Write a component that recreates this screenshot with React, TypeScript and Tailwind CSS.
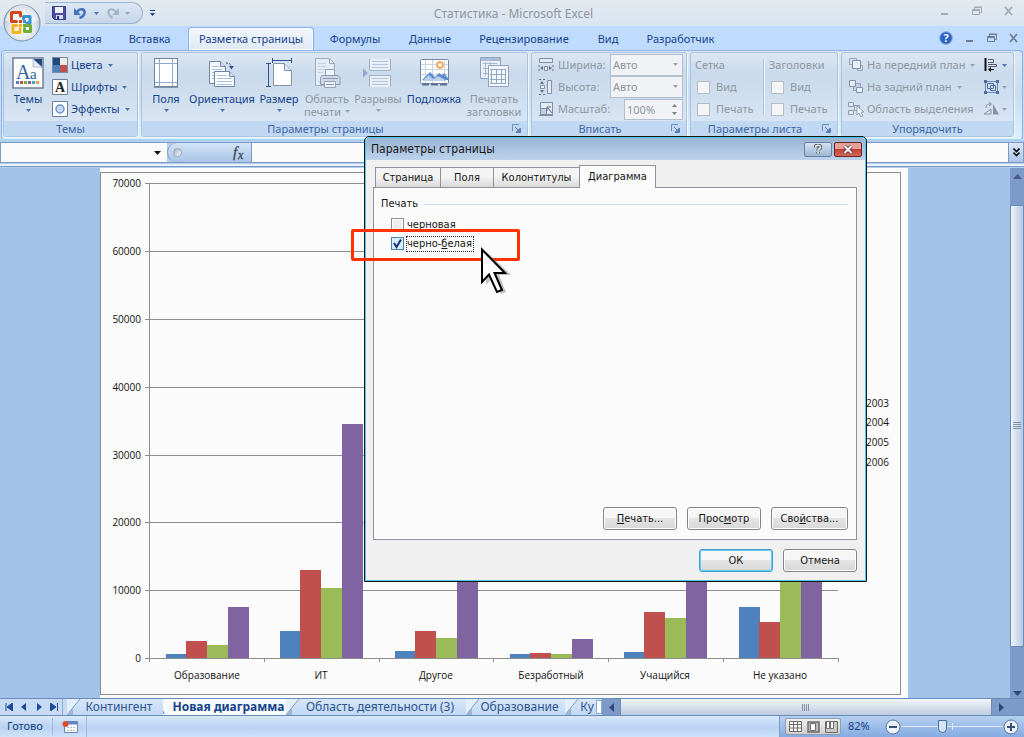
import React from 'react';

type IconProps = { children: React.ReactNode; w?: number; h?: number; className?: string };

function Icon({ children, w = 32, h = 32, className = '' }: IconProps) {
  return (
    <svg width={w} height={h} viewBox={`0 0 ${w} ${h}`} className={`block shrink-0 ${className}`} aria-hidden="true">
      {children}
    </svg>
  );
}

function Caret({ dim = false, className = '' }: { dim?: boolean; className?: string }) {
  return (
    <Icon w={5} h={3} className={className}>
      <path d="M0 0h5L2.5 3z" fill={dim ? '#9aa3ad' : '#4a74b0'} />
    </Icon>
  );
}

/* ---------- ribbon icons ---------- */

const ThemesIcon = () => (
  <Icon>
    <rect x="1" y="1" width="30" height="30" fill="#fdfdfd" stroke="#6d7f99" strokeWidth="1.5" />
    <path d="M21 2h9v9z" fill="#23457f" />
    <path d="M21 2v8h9z" fill="#e8eef7" stroke="#8a9cb8" strokeWidth=".6" />
    <text x="4" y="22" fontSize="20" fill="#2f62a3" className="font-['Liberation_Serif',serif]">A</text>
    <text x="18" y="22" fontSize="15" fill="#2f62a3" className="font-['Liberation_Serif',serif]">a</text>
    <path d="M4 24h3v3H4z" fill="#4f81bd" />
    <path d="M8 24h3v3H8z" fill="#c0504d" />
    <path d="M12 24h3v3h-3z" fill="#7fa843" />
    <path d="M16 24h3v3h-3z" fill="#8064a2" />
    <path d="M20 24h3v3h-3z" fill="#36a6c2" />
    <path d="M24 24h3v3h-3z" fill="#f79646" />
  </Icon>
);
const ColorsIcon = () => (
  <Icon w={16} h={16}>
    <path d="M0 0h8v8H0z" fill="#1f497d" />
    <path d="M8 0h8v8H8z" fill="#eeece1" />
    <path d="M0 8h8v8H0z" fill="#4f81bd" />
    <path d="M8 8h8v8H8z" fill="#c0504d" />
    <path d="M.5 .5h15v15H.5z" fill="none" stroke="#7c8ca6" />
  </Icon>
);
const FontsIcon = () => (
  <Icon w={16} h={16}>
    <path d="M.5 .5h15v15H.5z" fill="#fff" stroke="#6d7f99" />
    <text x="3" y="13" fontSize="14" fontWeight="700" fill="#222" className="font-['Liberation_Serif',serif]">A</text>
  </Icon>
);
const EffectsIcon = () => (
  <Icon w={16} h={16}>
    <path d="M.5 .5h15v15H.5z" fill="#fff" stroke="#6d7f99" />
    <circle cx="8" cy="8" r="4" fill="#c9dcf5" stroke="#6b93cc" strokeWidth="1.5" />
  </Icon>
);
const MarginsIcon = () => (
  <Icon>
    <rect x="4.500" y="1.500" width="23" height="28" fill="#fff" stroke="#6c83a6" />
    <path d="M9.500 2v27M22.500 2v27M5 6.500h22M5 25.500h22" stroke="#8faad0" fill="none" />
    <path d="M4 30.500h24" stroke="#8393aa" />
  </Icon>
);
const OrientationIcon = () => (
  <Icon>
    <path d="M3.500 4.500h11l5 5v17h-16z" fill="#f5f9ff" stroke="#6c83a6" />
    <path d="M14.500 4.500v5h5" fill="#d5e2f4" stroke="#6c83a6" />
    <path d="M6 9.500h7M6 12.500h10M6 15.500h3M6 18.500h3M6 21.500h3" stroke="#a9bfdf" />
    <path d="M8.500 14.500h15l5 5v10h-20z" fill="#fff" stroke="#6c83a6" />
    <path d="M23.500 14.500v5h5" fill="#d5e2f4" stroke="#6c83a6" />
    <path d="M11 18.500h10M11 21.500h15M11 24.500h15M11 27.500h15" stroke="#a9bfdf" />
    <path d="M20 6c3 0 5 1 5.500 4" fill="none" stroke="#34538a" strokeDasharray="2 1" />
    <path d="M23 9h5l-2.500 3.500z" fill="#34538a" />
  </Icon>
);
const SizeIcon = () => (
  <Icon>
    <path d="M10.500 6.500h11l7 7v15h-18z" fill="#fff" stroke="#8393aa" />
    <path d="M21.500 6.500v7h7" fill="#dbe6f5" stroke="#8393aa" />
    <path d="M10 3.500h18M9.500 1v5M28.500 1v5M5.500 7v22M3 6.500h5M3 29.500h5" stroke="#34538a" fill="none" />
  </Icon>
);
const PrintAreaIcon = () => (
  <Icon>
    <path d="M4.500 1.500h14l5 5v22h-19z" fill="#e4ebf4" stroke="#9eacc0" />
    <path d="M18.500 1.500v5h5" fill="none" stroke="#9eacc0" />
    <path d="M7 6.500h8M7 9.500h8M7 12.500h7M7 15.500h5M7 24.500h2" stroke="#c3cfe0" />
    <path d="M14.500 12.500h9v7h-9z" fill="#f2f6fa" stroke="#93a2b8" />
    <path d="M11 18.500h16l2 2v7H9.500v-7z" fill="#cfd9e6" stroke="#8b9ab0" />
    <path d="M13.500 24.500h11v6h-11z" fill="#edf2f8" stroke="#93a2b8" />
    <path d="M12 21.500h15M15 27.500h8" stroke="#8b9ab0" />
  </Icon>
);
const BreaksIcon = () => (
  <Icon>
    <path d="M7.500 2v11.500h21V2M7.500 30V18.500h21V30" fill="#e9eff7" stroke="#9fb0c8" />
    <path d="M10 4.500h16M10 7.500h16M10 10.500h16M10 21.500h16M10 24.500h16M10 27.500h16" stroke="#b5c4d9" />
    <path d="M1 11.500l5 4.500-5 4.500z" fill="#93a7c6" />
  </Icon>
);
const BackgroundIcon = () => (
  <Icon>
    <rect x="2.500" y="2.500" width="28" height="24" rx="1" fill="#fdfeff" stroke="#7489a8" />
    <path d="M7.500 3v23M14.500 3v23M26.500 3v23M3 7.500h27M3 12.500h27M3 17.500h27" stroke="#c8d5e6" />
    <circle cx="22" cy="8" r="3" fill="#fff1d0" stroke="#ef9a45" strokeWidth="1.500" />
    <path d="M4 23l8-8 5 5 4-4 3 2 2-2 4 5v2H4z" fill="#5d8cca" />
    <path d="M4 24l7-6 4 4 5-3 9 5z" fill="#b7cfec" />
    <path d="M4 27.500h26" stroke="#5c6f8c" strokeWidth="2" strokeDasharray="7 2" />
  </Icon>
);
const TitlesIcon = () => (
  <Icon>
    <path d="M2.500 .5h20v21h-20z" fill="#e8eff8" stroke="#8fa2be" />
    <path d="M3 2.500h19" stroke="#a9bbd5" strokeWidth="3" />
    <path d="M5 6.500h14M5 11.500h14M5 16.500h14M7.500 5v14M12.500 5v14" stroke="#a5b8d3" />
    <path d="M10.500 8.500h20v21h-20z" fill="#f4f8fd" stroke="#8fa2be" />
    <path d="M12 12.500h15M12 17.500h15M12 22.500h15M12 26.500h15M13.500 12v15M18.500 12v15M23.500 12v15M27.500 12v15" stroke="#91a7c7" />
  </Icon>
);
const WidthIcon = () => (
  <Icon w={16} h={16}>
    <path d="M1.500 1.500h13v4h-13z" fill="#e3eaf3" stroke="#7f8fa8" />
    <path d="M1 8v2M1 12v2M15 8v2M15 12v2" stroke="#5f6f8a" />
    <path d="M5 9v4l-3-2zM11 9v4l3-2z" fill="#5f6f8a" />
    <path d="M6.500 9.500h3v4h-3z" fill="#eef3f9" stroke="#7f8fa8" />
  </Icon>
);
const HeightIcon = () => (
  <Icon w={16} h={16}>
    <path d="M9.500 1.500h4v13h-4z" fill="#e3eaf3" stroke="#7f8fa8" />
    <path d="M1 .5h2M5 .5h2M1 15.500h2M5 15.500h2" stroke="#5f6f8a" />
    <path d="M2 5h4L4 2zM2 11h4l-2 3z" fill="#5f6f8a" />
    <path d="M2.500 6.500h4v3h-4z" fill="#eef3f9" stroke="#7f8fa8" />
  </Icon>
);
const ScaleIcon = () => (
  <Icon w={16} h={16}>
    <path d="M2.500 1.500h12v12h-12z" fill="#e3eaf3" stroke="#7f8fa8" />
    <path d="M2.500 7.500h6v6h-6z" fill="#c2cfe0" stroke="#7f8fa8" />
    <path d="M14 12L9 6M9 10V6h4" stroke="#5f6f8a" fill="none" />
    <path d="M1 14.500h14" stroke="#7f8fa8" />
  </Icon>
);
const FrontIcon = () => (
  <Icon w={16} h={16}>
    <path d="M1.500 1.500h7v6h-7zM9.500 8.500h5v5h-5z" fill="#d5deea" stroke="#95a3b8" />
    <path d="M4.500 3.500h8v8h-8z" fill="#e8eef6" stroke="#8291aa" />
  </Icon>
);
const BackIcon = () => (
  <Icon w={16} h={16}>
    <path d="M5.500 4.500h7v7h-7z" fill="#c5d1e1" stroke="#95a3b8" />
    <path d="M1.500 1.500h6v6h-6zM8.500 8.500h6v5h-6z" fill="#e8eef6" stroke="#8291aa" />
  </Icon>
);
const SelectionIcon = () => (
  <Icon w={16} h={16}>
    <path d="M.5 1.500h5v4h-5zM.5 9.500h5v4h-5zM6.500 4.500h5v5h-5z" fill="#dde5ef" stroke="#8f9db3" />
    <path d="M9 5v9l2-2 2 4 2-1-2-4h3z" fill="#f5f8fb" stroke="#8291aa" strokeWidth=".8" />
  </Icon>
);
const AlignIcon = () => (
  <Icon w={16} h={16}>
    <path d="M2.500 1v13" stroke="#111" strokeWidth="2" />
    <path d="M5 2.500h5.500v3H5M5 7.500h8.500v2H5" fill="#dfe7f1" stroke="#4f5e78" />
    <path d="M7 12.500h4" stroke="#111" />
    <path d="M8 10v5l-3-2.500z" fill="#111" />
  </Icon>
);
const GroupIcon = () => (
  <Icon w={16} h={16}>
    <path d="M2.500 2.500h12v11h-12z" fill="none" stroke="#7089b5" />
    <path d="M4.500 4.500h6v5h-6zM7.500 6.500h5v5h-5z" fill="#d7e2f1" stroke="#4c6ba3" />
    <path d="M1 1h3v3H1zM13 1h3v3h-3zM1 12h3v3H1zM13 12h3v3h-3z" fill="#4c6ba3" />
  </Icon>
);
const RotateIcon = () => (
  <Icon w={16} h={16}>
    <path d="M8 13H1l7-5z" fill="#d7dfe9" stroke="#8492a8" />
    <path d="M10 13.500h6L10 3z" fill="#8492a8" />
    <path d="M3 7c0-3 1-4 5-4M6 1l2.500 2L6 5" fill="none" stroke="#8492a8" />
  </Icon>
);

const Launcher = () => (
  <button aria-label="Открыть диалог" className="absolute right-[6px] top-[3px]">
    <Icon w={9} h={9}>
      <path d="M.5 7V.5H7" fill="none" stroke="#6e8fbd" />
      <path d="M3 3l3 3M8.500 4v4.500H4z" stroke="#5a7eb4" fill="#e5effa" />
      <path d="M8 4v4H4z" fill="#5a7eb4" />
    </Icon>
  </button>
);

const OfficeLogo = () => (
  <Icon w={38} h={38}>
    <defs>
      <radialGradient id="orb" cx=".5" cy=".65" r=".65">
        <stop offset="0" stopColor="#fff" />
        <stop offset=".55" stopColor="#dfe5ed" />
        <stop offset="1" stopColor="#9fafc4" />
      </radialGradient>
    </defs>
    <circle cx="19" cy="19" r="18" fill="url(#orb)" stroke="#7c8fa9" />
    <path d="M3 17a16 16 0 0 1 32 0q-16 5-32 0z" fill="#fff" opacity=".6" />
    <g fill="none" strokeWidth="3" strokeLinejoin="round" strokeLinecap="round">
      <path d="M13.500 17.500H8.500V8.500H17.500V12" stroke="#d6451a" />
      <path d="M20.500 15V12.500h6.500V19h-3" stroke="#3b93d3" />
      <path d="M17 24.500v4h-7v-7h4" stroke="#f4b41d" />
      <path d="M24 21.500h3.500v6h-6v-3" stroke="#6fae3a" />
    </g>
    <path d="M16 16h3v3h-3z" fill="#d6451a" />
    <path d="M20 16h3v3h-3z" fill="#3b93d3" />
    <path d="M16 20h3v3h-3z" fill="#f4b41d" />
    <path d="M20 20h3v3h-3z" fill="#6fae3a" />
  </Icon>
);

/* ---------- ribbon parts ---------- */

const tabs = [
  { label: 'Главная', cls: 'w-[70px]' },
  { label: 'Вставка', cls: 'w-[69px]' },
  { label: 'Разметка страницы', cls: 'w-[126px] ml-1', active: true },
  { label: 'Формулы', cls: 'w-[82px]' },
  { label: 'Данные', cls: 'w-[68px]' },
  { label: 'Рецензирование', cls: 'w-[120px]' },
  { label: 'Вид', cls: 'w-[48px]' },
  { label: 'Разработчик', cls: 'w-[97px]' },
];

function Group({ title, width, launcher, children }: { title: string; width: string; launcher?: boolean; children: React.ReactNode }) {
  return (
    <section className={`${width} flex h-[85px] shrink-0 flex-col overflow-hidden rounded-[3px] border border-[#a9c3e2] bg-linear-to-b from-[#dde7f3] from-0% via-[#c9daec] via-25% to-[#dbe7f5] shadow-[1px_1px_0_#f0f6fd]`}>
      <div className="flex min-h-0 flex-1">{children}</div>
      <div className={`relative h-[15px] bg-[#c1d8f3] text-center text-[11px] leading-[15px] text-[#3f66a3] ${launcher ? 'pr-[18px]' : ''}`}>
        {title}
        {launcher && <Launcher />}
      </div>
    </section>
  );
}

function BigButton({ icon, lines, width, dim, caret = 'none' }: { icon: React.ReactNode; lines: string[]; width: string; dim?: boolean; caret?: 'none' | 'below' | 'inline' }) {
  return (
    <button disabled={dim} className={`${width} flex shrink-0 flex-col items-center pt-1 text-[11px] leading-[13px] whitespace-nowrap ${dim ? 'text-[#8e979f]' : 'text-[#15428b]'}`}>
      {icon}
      <span className="mt-[3px]">{lines[0]}</span>
      {lines[1] && (
        <span className="flex items-center gap-1">
          {lines[1]}
          {caret === 'inline' && <Caret dim />}
        </span>
      )}
      {caret === 'below' && <Caret dim={dim} className="mt-1" />}
    </button>
  );
}

function SmallButton({ icon, label, dim, caret = true }: { icon: React.ReactNode; label: string; dim?: boolean; caret?: boolean }) {
  return (
    <button disabled={dim} className={`flex h-[22px] items-center whitespace-nowrap text-[11px] ${dim ? 'text-[#8e979f]' : 'text-[#15428b]'}`}>
      {icon}
      <span className={label ? 'ml-[3px]' : ''}>{label}</span>
      {caret && <Caret dim={dim} className={label ? 'ml-[5px]' : 'ml-[3px]'} />}
    </button>
  );
}

function FitRow({ icon, label, children }: { icon: React.ReactNode; label: string; children: React.ReactNode }) {
  return (
    <label className="flex h-[22px] items-center gap-1 text-[11px] text-[#8e979f]">
      {icon}
      <span className="flex-1">{label}</span>
      {children}
    </label>
  );
}

function AutoSelect() {
  return (
    <span className="relative flex">
      <select disabled defaultValue="Авто" className="h-[22px] w-[73px] appearance-none border border-[#b4bfcc] bg-[#f0f2f5] px-[2px] text-[11px] text-[#8e979f] opacity-100">
        <option>Авто</option>
      </select>
      <Caret dim className="absolute right-[5px] top-[9px]" />
    </span>
  );
}

function SheetOptions({ title }: { title: string }) {
  return (
    <div role="group" aria-label={title} className="flex flex-col text-[11px] text-[#8e979f]">
      <div className="flex h-[22px] items-center">{title}</div>
      {['Вид', 'Печать'].map((t) => (
        <label key={t} className="flex h-[22px] items-center gap-[6px]">
          <input type="checkbox" disabled className="ml-[2px] size-[13px] appearance-none border border-[#b5bcc4] bg-[#f4f5f6]" />
          {t}
        </label>
      ))}
    </div>
  );
}

function WindowGlyph({ kind, color }: { kind: 'min' | 'restore' | 'close'; color: string }) {
  return (
    <Icon w={10} h={10}>
      {kind === 'min' && <path d="M1 8h7" stroke={color} strokeWidth="2" />}
      {kind === 'restore' && (
        <path d="M2.500 3V1.500h7v5H8M.5 3.500h7v5h-7zM.5 4.500h7M2 1h8" fill="none" stroke={color} />
      )}
      {kind === 'close' && <path d="M1 1l7 8M8 1L1 9" stroke={color} strokeWidth="1.800" />}
    </Icon>
  );
}

/* ---------- chart ---------- */

const BASE = 658;
const colors = ['#4f81bd', '#c0504d', '#9bbb59', '#8064a2'];
const categories = [
  { name: 'Образование', x: 166, tops: [654, 641, 645, 607] },
  { name: 'ИТ', x: 280, tops: [631, 570, 588, 424] },
  { name: 'Другое', x: 395, tops: [651, 631, 638, 540] },
  { name: 'Безработный', x: 510, tops: [654, 653, 654, 639] },
  { name: 'Учащийся', x: 624, tops: [652, 612, 618, 500] },
  { name: 'Не указано', x: 739, tops: [607, 622, 560, 480] },
];
const axis = [0, 10000, 20000, 30000, 40000, 50000, 60000, 70000];
const axisY = [658, 590, 522, 455, 387, 319, 251, 183];
const legend = [
  { year: '2003', y: 407 },
  { year: '2004', y: 426 },
  { year: '2005', y: 446 },
  { year: '2006', y: 466 },
];

function Chart() {
  return (
    <svg viewBox="100 168 808 530" className="block h-full w-full bg-[#fbfbfb] font-['Open_Sans','Noto_Sans',sans-serif] text-[10px]" role="img" aria-label="Диаграмма">
      <rect x="100.500" y="172.500" width="800" height="522" fill="none" stroke="#8e8e8e" />
      {axis.map((v, i) => (
        <g key={v}>
          <path d={`M145 ${axisY[i] + 0.5}H838`} stroke="#8e8e8e" />
          <text x="141" y={axisY[i] + 4} textAnchor="end" fill="#111">{v}</text>
        </g>
      ))}
      <path d="M149.500 183V662M264.500 658v4M379.500 658v4M493.500 658v4M608.500 658v4M723.500 658v4M838.500 658v4" stroke="#8e8e8e" />
      {categories.map((c) => (
        <g key={c.name}>
          {c.tops.map((t, i) => (
            <rect key={i} x={c.x + i * 21 - (i ? 1 : 0)} y={t} width="21" height={BASE - t} fill={colors[i]} />
          ))}
          <text x={c.x + 41} y="679" textAnchor="middle" fill="#111">{c.name}</text>
        </g>
      ))}
      {legend.map((l, i) => (
        <g key={l.year}>
          <rect x="856" y={l.y - 7} width="6" height="6" fill={colors[i]} />
          <text x="866" y={l.y} fill="#111">{l.year}</text>
        </g>
      ))}
    </svg>
  );
}

/* ---------- dialog ---------- */

function DialogButton({ children, width, primary }: { children: React.ReactNode; width: string; primary?: boolean }) {
  return (
    <button className={`${width} h-[23px] rounded-[3px] border bg-linear-to-b from-[#f6f6f6] from-45% via-[#e3e3e3] via-50% to-[#d8d8d8] ${primary ? 'border-[#3c9fd0] shadow-[inset_0_0_0_1px_#62cdf0]' : 'border-[#858585] shadow-[inset_0_0_0_1px_#fff]'}`}>
      {children}
    </button>
  );
}

const dialogTabs = [
  { label: 'Страница', cls: 'w-[66px]' },
  { label: 'Поля', cls: 'w-[54px]' },
  { label: 'Колонтитулы', cls: 'w-[87px]' },
];

function PageSetupDialog() {
  return (
    <div role="dialog" aria-label="Параметры страницы" className="absolute left-[364px] top-[136px] z-20 flex h-[446px] w-[503px] flex-col rounded-t-[5px] border border-[#101820] bg-[#f0f0f0] font-['DejaVu_Sans_Condensed','Noto_Sans',sans-serif] text-[11px] leading-[14px] text-[#161616] shadow-[inset_0_0_0_1px_#52c5e8]">
      <header className="m-px flex h-[22px] items-center rounded-t-[4px] bg-linear-to-b from-[#98b4d2] to-[#bdd3ec] pl-[5px] pr-[3px]">
        <h2 className="flex-1 text-[12px]">Параметры страницы</h2>
        <button aria-label="Справка" className="mr-[2px] flex h-[15px] w-[28px] items-center justify-center rounded-[2px] border border-[#6582a5] bg-linear-to-b from-[#d5e2f0] to-[#9fb8d3]">
          <Icon w={10} h={10}>
            <path d="M2.500 3.500C2.500 .5 7.500 .5 7.500 3.200 7.500 5 5 4.500 5 6.500M5 8v1.500" fill="none" stroke="#3b4756" strokeWidth="3.400" />
            <path d="M2.500 3.500C2.500 .5 7.500 .5 7.500 3.200 7.500 5 5 4.500 5 6.500M5 8v1.500" fill="none" stroke="#fff" strokeWidth="1.600" />
          </Icon>
        </button>
        <button aria-label="Закрыть" className="flex h-[15px] w-[28px] items-center justify-center rounded-[2px] border border-[#6a2722] bg-linear-to-b from-[#e5a197] from-45% via-[#c0402f] via-50% to-[#d5675a]">
          <Icon w={12} h={9}>
            <path d="M2.500 1l7 7M9.500 1l-7 7" stroke="#5b2a2a" strokeWidth="3.600" />
            <path d="M2.500 1l7 7M9.500 1l-7 7" stroke="#fff" strokeWidth="2" />
          </Icon>
        </button>
      </header>
      <div className="flex flex-1 flex-col pb-[9px] pl-2 pr-[9px] pt-1">
        <div role="tablist" className="flex items-end pl-[2px]">
          {dialogTabs.map((t) => (
            <button key={t.label} role="tab" className={`${t.cls} -mr-px h-[20px] border border-b-0 border-[#8d929c] bg-linear-to-b from-[#f4f4f4] from-45% to-[#d9d9d9]`}>
              {t.label}
            </button>
          ))}
          <button role="tab" aria-selected="true" className="relative z-10 -mb-px h-[23px] w-[77px] border border-b-0 border-[#8d929c] bg-[#fbfbfb]">Диаграмма</button>
        </div>
        <div className="flex flex-1 flex-col border border-[#8d929c] bg-[#fbfbfb] pb-[9px] pl-[7px] pr-2 pt-[9px]">
          <div className="flex items-center gap-[6px]">
            Печать
            <span className="h-px flex-1 bg-[#d5dfe8]" />
          </div>
          <div className="mt-1 flex flex-col items-start pl-[10px]">
            <label className="flex h-[19px] items-center gap-[2px]">
              <input type="checkbox" className="size-[13px] appearance-none border border-[#8e8f8f] bg-[#eceeef] shadow-[inset_0_0_0_1px_#fff]" />
              <span className="px-px">черновая</span>
            </label>
            <label className="flex h-[19px] items-center gap-[2px]">
              <span className="relative flex">
                <input type="checkbox" defaultChecked className="peer size-[13px] appearance-none border border-[#4f86a8] bg-[#d5eefa]" />
                <svg viewBox="0 0 13 13" className="pointer-events-none absolute inset-0 hidden size-[13px] peer-checked:block" aria-hidden="true">
                  <path d="M3 6l2.500 4L10 2.500" fill="none" stroke="#1d2f7a" strokeWidth="2" />
                </svg>
              </span>
              <span className="border border-dotted border-[#333] pr-px">черно-<u>б</u>елая</span>
            </label>
          </div>
          <div className="mt-auto flex justify-end gap-[10px]">
            <DialogButton width="w-[74px]"><u>П</u>ечать...</DialogButton>
            <DialogButton width="w-[74px]">Прос<u>м</u>отр</DialogButton>
            <DialogButton width="w-[77px]">Сво<u>й</u>ства...</DialogButton>
          </div>
        </div>
        <div className="mt-[9px] flex justify-end gap-[10px]">
          <DialogButton width="w-[74px]" primary>ОК</DialogButton>
          <DialogButton width="w-[74px]">Отмена</DialogButton>
        </div>
      </div>
    </div>
  );
}

/* ---------- bottom bars ---------- */

function SheetTab({ label, width, active }: { label: string; width: string; active?: boolean }) {
  return (
    <button className={`${width} relative flex h-[16px] shrink-0 items-center justify-center overflow-hidden whitespace-nowrap pl-2 text-[12px] leading-[16px] ${active ? 'bg-[#f8fbff] font-bold text-[#15428b]' : 'bg-linear-to-b from-[#d9e8fa] to-[#c1d7f2] text-[#2c5491]'}`}>
      <svg width="14" height="16" viewBox="0 0 14 16" className="absolute left-0 top-0" aria-hidden="true">
        {active ? (
          <path d="M0 0v15h2l-2-4z" fill="#7f9dc4" />
        ) : (
          <>
            <path d="M0 0h13L0 16z" fill="#e4eefa" />
            <path d="M13 0L0 16" stroke="#7f9dc4" />
            <path d="M0 16l6-7v7z" fill="#9db4d2" />
          </>
        )}
      </svg>
      {label}
    </button>
  );
}

const navGlyphs = ['M1 0v8M7.500 0v8L2 4z', 'M6 0v8L1 4z', 'M2 0v8l5-4z', 'M7.500 0v8M.5 0v8L6 4z'];
const navNames = ['Первый лист', 'Предыдущий лист', 'Следующий лист', 'Последний лист'];

export default function App() {
  return (
    <div className="relative flex h-screen min-h-[600px] flex-col overflow-hidden bg-[#bfdbff] font-['Noto_Sans','Open_Sans',sans-serif] text-[11px] text-[#15428b]">
      {/* title bar */}
      <header className="flex h-[26px] shrink-0 items-center bg-linear-to-b from-[#e4eaef] to-[#d8e4f0]">
        <div className="ml-[45px] flex h-[22px] w-[98px] items-center gap-[7px] rounded-r-full border border-l-0 border-[#9db6d4] bg-linear-to-b from-[#dce7f4] to-[#c6d6ea] pl-[7px]">
          <button aria-label="Сохранить">
            <Icon w={14} h={14}>
              <path d="M.5 .5h13v13h-11l-2-2z" fill="#4b4fa8" stroke="#3a3d86" />
              <path d="M3 1h8v6H3z" fill="#eef2fb" />
              <path d="M4 9h7v4H4z" fill="#d5dbe9" />
              <path d="M5 10h2v3H5z" fill="#2d3070" />
            </Icon>
          </button>
          <button aria-label="Отменить" className="flex items-center gap-[7px]">
            <Icon w={14} h={14}>
              <path d="M4 6C7 1.500 12 3 11.500 7c-.5 2.500-2 4-5 5" fill="none" stroke="#4670c0" strokeWidth="2.600" />
              <path d="M1 2v7h7z" fill="#4670c0" />
            </Icon>
            <Caret />
          </button>
          <button aria-label="Вернуть" className="flex items-center gap-[5px]">
            <Icon w={14} h={14}>
              <path d="M10 6C7 1.500 2 3 2.500 7c.5 2.500 2 4 4 5" fill="none" stroke="#a4b3c9" strokeWidth="2" />
              <path d="M13 2v7H6z" fill="#a4b3c9" />
            </Icon>
            <Caret dim />
          </button>
        </div>
        <button aria-label="Настройка панели" className="ml-[7px]">
          <Icon w={5} h={6}>
            <path d="M0 .5h5" stroke="#15428b" />
            <path d="M0 3h5L2.500 6z" fill="#15428b" />
          </Icon>
        </button>
        <h1 className="flex-1 pr-[68px] pt-[2px] text-center text-[12px] text-[#8e959c]">Статистика - Microsoft Excel</h1>
        <div className="mr-[10px] flex gap-[22px] pb-1">
          <button aria-label="Свернуть"><WindowGlyph kind="min" color="#a3a9af" /></button>
          <button aria-label="Восстановить"><WindowGlyph kind="restore" color="#a3a9af" /></button>
          <button aria-label="Закрыть окно"><WindowGlyph kind="close" color="#a3a9af" /></button>
        </div>
      </header>
      <button aria-label="Office" className="absolute left-[3px] top-1 z-10"><OfficeLogo /></button>

      {/* ribbon tabs */}
      <nav className="flex h-[24px] shrink-0 items-end bg-[#bfdbff] pl-[45px]">
        {tabs.map((t) => (
          <button
            key={t.label}
            className={`${t.cls} shrink-0 whitespace-nowrap text-center text-[11px] ${t.active ? 'h-[23px] rounded-t-[4px] border border-b-0 border-[#8db2e3] bg-linear-to-b from-[#f2f7fd] to-[#dfe9f5] shadow-[inset_0_0_0_1px_#f4f9ff]' : 'h-[22px]'}`}
          >
            {t.label}
          </button>
        ))}
        <div className="ml-auto mr-[5px] flex items-center gap-[12px] self-center">
          <button aria-label="Справка">
            <Icon w={14} h={14}>
              <circle cx="7" cy="7" r="6.300" fill="#2d63c4" stroke="#8fa9d2" />
              <text x="7" y="11" textAnchor="middle" fontSize="11" fontWeight="700" fill="#fff">?</text>
            </Icon>
          </button>
          <button aria-label="Свернуть книгу"><WindowGlyph kind="min" color="#6f7d8c" /></button>
          <button aria-label="Восстановить книгу"><WindowGlyph kind="restore" color="#6f7d8c" /></button>
          <button aria-label="Закрыть книгу"><WindowGlyph kind="close" color="#6f7d8c" /></button>
        </div>
      </nav>

      {/* ribbon */}
      <div className="mx-px flex h-[90px] shrink-0 gap-[3px] rounded-[4px] border border-[#8db2e3] border-b-[#9cd8ee] bg-linear-to-b from-[#dbe6f4] via-[#cbdcef] to-[#dcf1fc] px-px py-px">
        <Group title="Темы" width="w-[135px]">
          <BigButton icon={<ThemesIcon />} lines={['Темы']} width="w-[48px]" caret="below" />
          <div className="flex flex-col pt-px">
            <SmallButton icon={<ColorsIcon />} label="Цвета" />
            <SmallButton icon={<FontsIcon />} label="Шрифты" />
            <SmallButton icon={<EffectsIcon />} label="Эффекты" />
          </div>
        </Group>
        <Group title="Параметры страницы" width="w-[387px]" launcher>
          <div className="flex pl-[2px]">
            <BigButton icon={<MarginsIcon />} lines={['Поля']} width="w-[44px]" caret="below" />
            <BigButton icon={<OrientationIcon />} lines={['Ориентация']} width="w-[68px]" caret="below" />
            <BigButton icon={<SizeIcon />} lines={['Размер']} width="w-[46px]" caret="below" />
            <BigButton icon={<PrintAreaIcon />} lines={['Область', 'печати']} width="w-[50px]" dim caret="inline" />
            <BigButton icon={<BreaksIcon />} lines={['Разрывы']} width="w-[52px]" dim caret="below" />
            <BigButton icon={<BackgroundIcon />} lines={['Подложка']} width="w-[60px]" />
            <BigButton icon={<TitlesIcon />} lines={['Печатать', 'заголовки']} width="w-[60px]" dim />
          </div>
        </Group>
        <Group title="Вписать" width="w-[156px]" launcher>
          <div className="flex flex-1 flex-col pl-[6px] pr-[3px] pt-px">
            <FitRow icon={<WidthIcon />} label="Ширина:"><AutoSelect /></FitRow>
            <FitRow icon={<HeightIcon />} label="Высота:"><AutoSelect /></FitRow>
            <FitRow icon={<ScaleIcon />} label="Масштаб:">
              <span className="relative flex">
                <input disabled defaultValue="100%" className="h-[21px] w-[59px] border border-[#b4bfcc] bg-[#f0f2f5] px-[2px]" />
                <Icon w={5} h={11} className="absolute right-[6px] top-[5px]">
                  <path d="M0 3h5L2.500 0zM0 8h5l-2.500 3z" fill="#777f88" />
                </Icon>
              </span>
            </FitRow>
          </div>
        </Group>
        <Group title="Параметры листа" width="w-[148px]" launcher>
          <div className="flex pl-[4px] pt-px">
            <div className="w-[68px]"><SheetOptions title="Сетка" /></div>
            <div className="mr-[4px] mt-[5px] h-[56px] w-[2px] border-l border-[#a9c3e2] bg-[#eef5fc]" />
            <SheetOptions title="Заголовки" />
          </div>
        </Group>
        <Group title="Упорядочить" width="w-[173px]">
          <div className="flex flex-1 justify-between pl-[6px] pr-[6px] pt-px">
            <div className="flex flex-col">
              <SmallButton icon={<FrontIcon />} label="На передний план" dim />
              <SmallButton icon={<BackIcon />} label="На задний план" dim />
              <SmallButton icon={<SelectionIcon />} label="Область выделения" dim caret={false} />
            </div>
            <div className="flex flex-col">
              <SmallButton icon={<AlignIcon />} label="" />
              <SmallButton icon={<GroupIcon />} label="" dim />
              <SmallButton icon={<RotateIcon />} label="" dim />
            </div>
          </div>
        </Group>
      </div>

      {/* formula bar */}
      <div className="flex h-[28px] shrink-0 flex-col bg-[#b3cfef] pt-[2px]">
        <div className="flex h-[21px] border-y border-[#7d9bc4]">
          <input aria-label="Имя" className="w-[152px] border-l border-[#7d9bc4] bg-[#fbfbfb]" />
          <button aria-label="Список имён" className="flex w-[15px] items-center bg-[#fbfbfb] pl-[2px]">
            <Icon w={7} h={4}><path d="M0 0h7L3.500 4z" fill="#111" /></Icon>
          </button>
          <div className="flex w-[85px] items-center justify-between rounded-l-full border-r border-l border-[#7d9bc4] bg-linear-to-b from-[#d3e3f6] to-[#a9c5e8] pl-[5px] pr-[5px]">
            <span className="size-[9px] rounded-full border border-[#98a9bf] bg-linear-to-br from-[#9fafc4] to-white" />
            <button aria-label="Вставить функцию">
              <Icon w={14} h={16}>
                <text x="1" y="12" fontSize="15" fontStyle="italic" fill="#3f474f" stroke="#3f474f" strokeWidth=".3" className="font-['Liberation_Serif',serif]">f</text>
                <text x="6" y="14" fontSize="12" fontStyle="italic" fill="#3f474f" stroke="#3f474f" strokeWidth=".3" className="font-['Liberation_Serif',serif]">x</text>
              </Icon>
            </button>
          </div>
          <input aria-label="Строка формул" className="min-w-0 flex-1 bg-[#fbfbfb]" />
          <button aria-label="Развернуть строку формул" className="flex w-[16px] items-center justify-center border border-y-0 border-[#7d9bc4] bg-linear-to-b from-[#dbe9f9] to-[#a9c5e8]">
            <Icon w={7} h={9}>
              <path d="M.5 .5l3 3 3-3M.5 4.500l3 3 3-3" fill="none" stroke="#111" strokeWidth="1.600" />
            </Icon>
          </button>
        </div>
        <div className="mt-px h-[3px] border-b border-[#7d9bc4] bg-[#e9f1fa]" />
      </div>

      {/* workspace */}
      <main className="flex min-h-0 flex-1 bg-[#a3c2ea]">
        <div className="ml-[100px] mr-[102px] min-w-0 flex-1"><Chart /></div>
        <div className="flex w-[14px] flex-col items-center bg-[#7d9bc8]">
          <button aria-label="Вверх" className="flex h-[37px] w-full justify-center pt-[6px]">
            <Icon w={9} h={5}><path d="M0 5h9L4.500 0z" fill="#4a5a8c" /></Icon>
          </button>
          <div className="flex w-full flex-[442] items-center justify-center border border-[#6f8bb5] bg-linear-to-r from-[#f1f4f9] to-[#b4c9e6]">
            <Icon w={8} h={8}><path d="M0 .5h8M0 2.500h8M0 4.500h8M0 6.500h8" stroke="#8391a8" /></Icon>
          </div>
          <div className="w-full flex-[42]" />
          <button aria-label="Вниз" className="h-[9px]">
            <Icon w={9} h={5}><path d="M0 0h9L4.500 5z" fill="#34487c" /></Icon>
          </button>
        </div>
      </main>

      {/* sheet tabs */}
      <div className="flex h-[18px] shrink-0 border-y border-[#6a8cba] bg-[#c7dcf4]">
        <div className="flex w-[63px] shrink-0 items-center gap-[7px] border-r border-[#8fabd0] pl-[5px]">
          {navGlyphs.map((d, i) => (
            <button key={d} aria-label={navNames[i]}><Icon w={8} h={8}><path d={d} fill="#1d4c96" stroke={i % 3 === 0 ? '#1d4c96' : 'none'} /></Icon></button>
          ))}
        </div>
        <div className="ml-1 flex w-[529px] min-w-0 shrink-0 overflow-hidden">
          <SheetTab label="Контингент" width="w-[96px]" />
          <SheetTab label="Новая диаграмма" width="w-[123px]" active />
          <SheetTab label="Область деятельности (3)" width="w-[180px]" />
          <SheetTab label="Образование" width="w-[99px]" />
          <SheetTab label="Ку" width="w-[36px]" />
        </div>
        <div className="my-px w-[6px] shrink-0 border border-[#8fabd0] bg-white" />
        <button aria-label="Влево" className="flex w-[18px] shrink-0 items-center justify-center bg-[#7d9bc8]">
          <Icon w={5} h={9}><path d="M5 0v9L0 4.500z" fill="#34487c" /></Icon>
        </button>
        <div className="flex flex-1 items-center justify-center border-x border-[#6f8bb5] bg-linear-to-b from-[#f3f6fa] to-[#bccbe0]">
          <Icon w={8} h={7}><path d="M.5 0v7M2.500 0v7M4.500 0v7M6.500 0v7" stroke="#8391a8" /></Icon>
        </div>
        <button aria-label="Вправо" className="flex w-[32px] shrink-0 items-center bg-[#7d9bc8] pl-[7px]">
          <Icon w={5} h={9}><path d="M0 0v9l5-4.500z" fill="#34487c" /></Icon>
        </button>
      </div>

      {/* status bar */}
      <footer className="flex h-[21px] shrink-0 items-center bg-linear-to-b from-[#d9e8fa] from-0% via-[#b8d2f1] via-55% to-[#cfe2fa] text-[11px]">
        <span className="w-[53px] border-r border-[#9dbade] pl-[7px]">Готово</span>
        <button aria-label="Запись макроса" className="flex h-full w-[34px] items-center justify-center border-r border-[#9dbade]">
          <Icon w={16} h={14}>
            <path d="M2.500 1.500h13v11h-13z" fill="#fff" stroke="#6c86b3" />
            <path d="M3 3h12" stroke="#5c86c8" strokeWidth="3" />
            <path d="M5 7.500h9M5 10.500h9" stroke="#a9bcd8" strokeDasharray="2 1" />
            <circle cx="3.500" cy="4" r="3" fill="#e0482e" />
          </Icon>
        </button>
        <div className="ml-auto flex h-full items-center border-l border-[#7d9bc8] bg-linear-to-b from-[#b5d0f1] to-[#85abe0] pl-[5px] pr-[5px]">
          <div className="flex h-[17px] w-[56px] items-center justify-around rounded-[2px] border border-[#8c9db5] bg-linear-to-b from-[#efefec] to-[#cfcfcb]">
            <button aria-label="Обычный">
              <Icon w={13} h={11}><path d="M.5 .5h12v10H.5zM.5 3.500h12M.5 7h12M4.500 .5v10M8.500 .5v10" fill="#fff" stroke="#6d6d6d" /></Icon>
            </button>
            <button aria-label="Разметка страницы">
              <Icon w={13} h={12}><path d="M1 1h11v10H1z" fill="#bbb" stroke="#6d6d6d" strokeWidth="1.500" /><path d="M3.500 2.500h5v7h-5z" fill="#fff" stroke="#6d6d6d" /></Icon>
            </button>
            <button aria-label="Страничный режим">
              <Icon w={13} h={12}><path d="M.5 .5h12v11H.5z" fill="#c9c9c9" stroke="#6d6d6d" /><path d="M1.500 .5h3v7h-3zM5.500 .5h3v7h-3z" fill="#fff" stroke="#6d6d6d" /></Icon>
            </button>
          </div>
          <span className="ml-[7px] w-[30px]">82%</span>
          <button aria-label="Уменьшить" className="ml-[7px]">
            <Icon w={16} h={16}><circle cx="8" cy="8" r="7" fill="#eaf1fa" stroke="#5c7396" /><path d="M4 8h8" stroke="#3b4f70" strokeWidth="2" /></Icon>
          </button>
          <input
            type="range"
            aria-label="Масштаб"
            defaultValue={40}
            className="h-[14px] w-[102px] appearance-none bg-[linear-gradient(#dfeafa,#dfeafa),linear-gradient(#dfeafa,#dfeafa)] bg-[length:100%_1px,1px_7px] bg-center bg-no-repeat [&::-webkit-slider-thumb]:h-[13px] [&::-webkit-slider-thumb]:w-[9px] [&::-webkit-slider-thumb]:appearance-none [&::-webkit-slider-thumb]:rounded-b-full [&::-webkit-slider-thumb]:border [&::-webkit-slider-thumb]:border-[#4f6d9c] [&::-webkit-slider-thumb]:bg-[#d5e4f7]"
          />
          <button aria-label="Увеличить">
            <Icon w={16} h={16}><circle cx="8" cy="8" r="7" fill="#eaf1fa" stroke="#5c7396" /><path d="M4 8h8M8 4v8" stroke="#3b4f70" strokeWidth="2" /></Icon>
          </button>
        </div>
      </footer>

      <PageSetupDialog />

      {/* highlight and pointer */}
      <div className="pointer-events-none absolute left-[351px] top-[229px] z-30 h-[32px] w-[169px] rounded-[2px] border-3 border-[#ff3300]" />
      <svg width="34" height="50" viewBox="0 0 34 50" className="pointer-events-none absolute left-[480px] top-[247px] z-30" aria-hidden="true">
        <path d="M6 4v34l7-8 8 17 5-2-7-17h12z" fill="#777" opacity=".45" />
        <path d="M2 2.500V35l7-7.500L17 45l5-2-7.500-17H25z" fill="#fff" stroke="#000" strokeWidth="2" />
      </svg>
    </div>
  );
}
